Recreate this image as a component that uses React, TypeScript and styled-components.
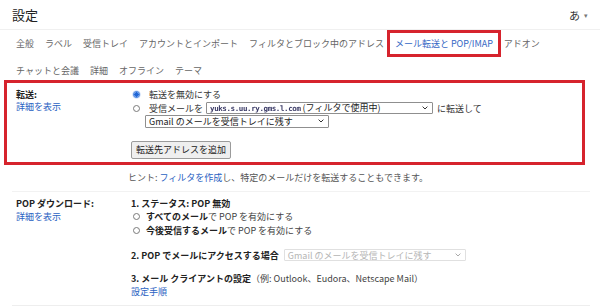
import React from "react";
import styled, { createGlobalStyle } from "styled-components";

const Global = createGlobalStyle`
  html, body { margin: 0; padding: 0; background: #fff; }
  body {
    font-family: "Noto Sans CJK JP", "Noto Sans", sans-serif;
    font-size: 9px;
    color: #333;
  }
`;

const RED = "#d6232d";
const BLUE = "#2a62c2";

const Page = styled.div`
  width: 600px;
  height: 306px;
  overflow: hidden;
  display: flex;
  flex-direction: column;
`;

const Header = styled.header`
  height: 29px;
  border-bottom: 1px solid #f0f0f0;
  display: flex;
  align-items: center;
  justify-content: space-between;
  padding: 0 12px 0 12px;
`;

const Title = styled.h1`
  margin: 0;
  font-size: 13px;
  font-weight: 400;
  color: #222;
  line-height: 16px;
`;

const InputMode = styled.div`
  display: flex;
  align-items: center;
  gap: 4px;
  font-size: 11px;
  color: #333;
  span { font-size: 7px; color: #777; }
`;

const Tabs = styled.nav`
  display: flex;
  flex-direction: column;
  row-gap: 14px;
  padding: 6.5px 0 3.5px 10.5px;
`;

const TabRow = styled.div`
  display: flex;
`;

const Tab = styled.span<{ $active?: boolean }>`
  position: relative;
  padding: 0 5.5px;
  line-height: 13px;
  white-space: nowrap;
  color: ${(p) => (p.$active ? "#3567c4" : "#666")};
  &::after {
    content: "";
    display: ${(p) => (p.$active ? "block" : "none")};
    position: absolute;
    left: -2.5px;
    right: -2.5px;
    top: -6.5px;
    bottom: -7.5px;
    border: 3.5px solid ${RED};
  }
`;

const Section = styled.section<{ $pt: number; $pb: number }>`
  display: grid;
  grid-template-columns: 115px 1fr;
  padding: ${(p) => p.$pt}px 0 ${(p) => p.$pb}px 16px;
`;

const Highlight = styled(Section)`
  margin: 0 15px 0 4px;
  border: 3px solid ${RED};
  padding-left: 9px;
`;

const HintRow = styled.div`
  margin: 0 10px 0 12px;
  padding: 6.5px 0 6.5px 116px;
  border-bottom: 1px solid #f2f2f2;
  line-height: 13px;
  color: #555;
`;

const PopSection = styled(Section)`
  margin: 0 10px 0 12px;
  padding-left: 4px;
  border-bottom: 1px solid #eeeeee;
`;

const LabelCol = styled.div`
  display: flex;
  flex-direction: column;
`;

const Label = styled.div`
  font-weight: 700;
  color: #222;
  line-height: 13px;
`;

const Link = styled.a`
  color: ${BLUE};
  text-decoration: none;
  line-height: 12px;
  cursor: pointer;
`;

const Col = styled.div`
  display: flex;
  flex-direction: column;
  align-items: flex-start;
`;

const Line = styled.div<{ $mt?: number }>`
  display: flex;
  align-items: center;
  min-height: 13px;
  line-height: 13px;
  white-space: nowrap;
  margin-top: ${(p) => p.$mt ?? 0}px;
`;

const Radio = styled.span<{ $checked?: boolean; $gap: number }>`
  box-sizing: border-box;
  width: 7px;
  height: 7px;
  border-radius: 50%;
  flex: none;
  margin: 0 ${(p) => p.$gap}px 0 2px;
  border: 1px solid ${(p) => (p.$checked ? "#2a6fdb" : "#7a7a7a")};
  background: ${(p) =>
    p.$checked ? "radial-gradient(circle, #1f66d6 0 2px, #ffffff 2.5px)" : "#fff"};
  box-shadow: ${(p) => (p.$checked ? "0 0 0 0.5px #b7cff5" : "none")};
`;

const Select = styled.div<{ $w: number; $disabled?: boolean }>`
  box-sizing: border-box;
  width: ${(p) => p.$w}px;
  height: 12.5px;
  display: flex;
  align-items: center;
  justify-content: space-between;
  padding: 0 4px 0 3px;
  border: 1px solid ${(p) => (p.$disabled ? "#e0e0e0" : "#8f8f8f")};
  border-radius: 1px;
  background: #fff;
  color: ${(p) => (p.$disabled ? "#b5b5b5" : "#222")};
  line-height: 11px;
  white-space: nowrap;
  overflow: hidden;
  font-size: 9px;
`;

const Masked = styled.span`
  font-family: "DejaVu Sans Mono", monospace;
  font-size: 7.5px;
  font-weight: 700;
  letter-spacing: -0.4px;
  color: #3a3a66;
  filter: blur(0.3px);
  margin-right: 2px;
`;

const Button = styled.button`
  margin-top: 13.5px;
  height: 18px;
  padding: 0 4px;
  border: 1px solid #9b9b9b;
  border-radius: 2px;
  background: #efefef;
  font-family: inherit;
  font-size: 9px;
  color: #222;
  line-height: 16px;
`;

const Bold = styled.b`
  font-weight: 700;
  color: #222;
`;

const Muted = styled.span`
  color: #444;
`;

const Chevron = ({ color = "#333" }: { color?: string }) => (
  <svg width="6" height="4" viewBox="0 0 6 4" style={{ flex: "none" }}>
    <path d="M0.6 0.6 L3 3 L5.4 0.6" fill="none" stroke={color} strokeWidth="1" />
  </svg>
);

export default function App() {
  return (
    <Page>
      <Global />
      <Header>
        <Title>設定</Title>
        <InputMode>
          あ<span>▾</span>
        </InputMode>
      </Header>
      <Tabs>
        <TabRow>
          <Tab>全般</Tab>
          <Tab>ラベル</Tab>
          <Tab>受信トレイ</Tab>
          <Tab>アカウントとインポート</Tab>
          <Tab>フィルタとブロック中のアドレス</Tab>
          <Tab $active>メール転送と POP/IMAP</Tab>
          <Tab>アドオン</Tab>
        </TabRow>
        <TabRow>
          <Tab>チャットと会議</Tab>
          <Tab>詳細</Tab>
          <Tab>オフライン</Tab>
          <Tab>テーマ</Tab>
        </TabRow>
      </Tabs>

      <Highlight $pt={4.5} $pb={2.5}>
        <LabelCol>
          <Label>転送:</Label>
          <Link>詳細を表示</Link>
        </LabelCol>
        <Col>
          <Line>
            <Radio $checked $gap={9} />
            転送を無効にする
          </Line>
          <Line $mt={1}>
            <Radio $gap={9} />
            受信メールを
            <Select $w={227} style={{ marginLeft: 3, marginRight: 4 }}>
              <span>
                <Masked>yuks.s.uu.ry.gms.l.com</Masked>(フィルタで使用中)
              </span>
              <Chevron />
            </Select>
            に転送して
          </Line>
          <Select $w={184} style={{ marginLeft: 14, marginTop: 0.5 }}>
            <span>Gmail のメールを受信トレイに残す</span>
            <Chevron />
          </Select>
          <Button>転送先アドレスを追加</Button>
        </Col>
      </Highlight>

      <HintRow>
        ヒント: <Link>フィルタを作成</Link>し、特定のメールだけを転送することもできます。
      </HintRow>

      <PopSection $pt={5.5} $pb={6.5}>
        <LabelCol>
          <Label>POP ダウンロード:</Label>
          <Link style={{ lineHeight: "13px" }}>詳細を表示</Link>
        </LabelCol>
        <Col>
          <Line>
            <Bold>1. ステータス: POP 無効</Bold>
          </Line>
          <Line>
            <Radio $gap={6} />
            <Bold>すべてのメール</Bold>
            <Muted>で POP を有効にする</Muted>
          </Line>
          <Line $mt={0.5}>
            <Radio $gap={6} />
            <Bold>今後受信するメール</Bold>
            <Muted>で POP を有効にする</Muted>
          </Line>
          <Line $mt={12}>
            <Bold>2. POP でメールにアクセスする場合</Bold>
            <Select $w={182} $disabled style={{ marginLeft: 5 }}>
              <span>Gmail のメールを受信トレイに残す</span>
              <Chevron color="#aaa" />
            </Select>
          </Line>
          <Line $mt={10.5}>
            <Bold>3. メール クライアントの設定</Bold>
            <Muted>（例: Outlook、Eudora、Netscape Mail）</Muted>
          </Line>
          <Line>
            <Link style={{ lineHeight: "13px" }}>設定手順</Link>
          </Line>
        </Col>
      </PopSection>
    </Page>
  );
}
